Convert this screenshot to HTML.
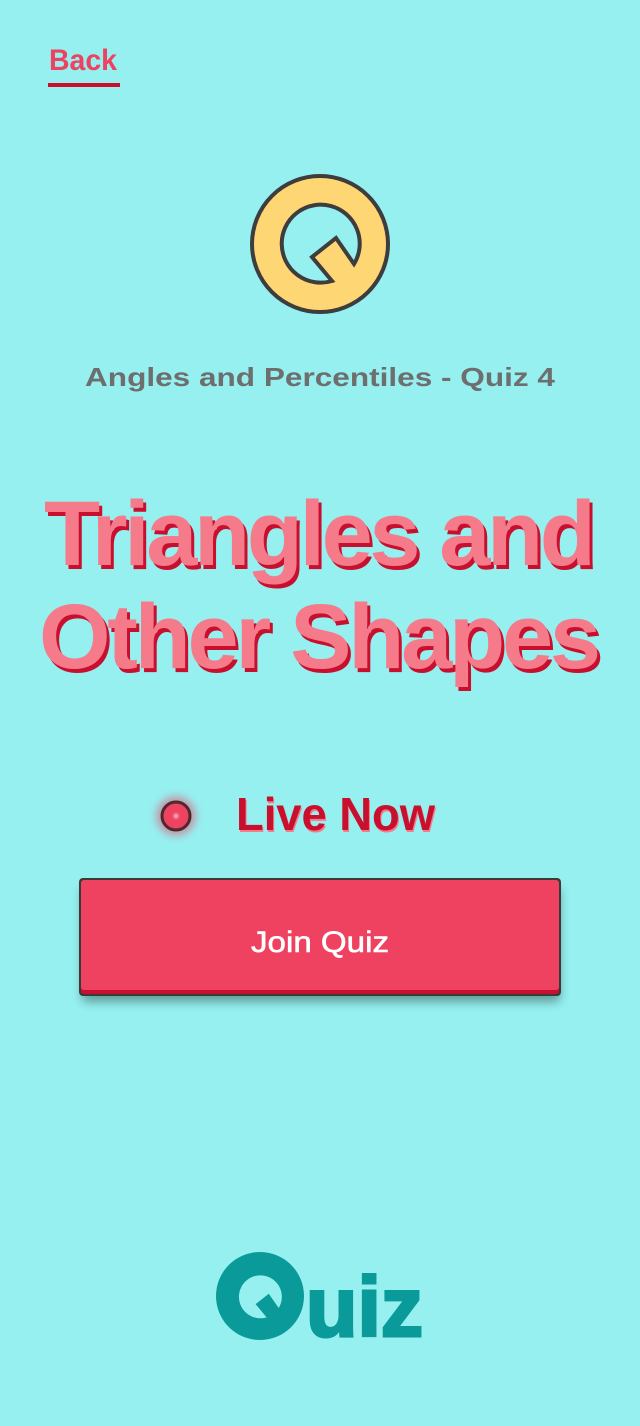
<!DOCTYPE html>
<html><head><meta charset="utf-8"><style>
html,body{margin:0;padding:0;background:#96f0f0;width:640px;height:1426px;overflow:hidden}
svg{display:block}
</style></head><body>
<svg width="640" height="1426" viewBox="0 0 640 1426" xmlns="http://www.w3.org/2000/svg" font-family="Liberation Sans, sans-serif">
<rect width="640" height="1426" fill="#96f0f0"/>
<text x="49" y="70" font-size="30" font-weight="bold" fill="#ee4260" textLength="68" lengthAdjust="spacingAndGlyphs">Back</text>
<rect x="48" y="83" width="72" height="4" fill="#c8102e"/>
<circle cx="320" cy="244" r="68" fill="#ffd674" stroke="#3d3d3d" stroke-width="4"/>
<path d="M354,264 L336,238 L312,257 L332,281 A39 39 0 1 1 354,264 Z" fill="#96f0f0" stroke="#3d3d3d" stroke-width="4" stroke-linejoin="miter"/>
<text x="320" y="386" text-anchor="middle" font-size="26" font-weight="bold" fill="#6e6e6e" textLength="470" lengthAdjust="spacingAndGlyphs">Angles and Percentiles - Quiz 4</text>
<g font-size="92" font-weight="bold" text-anchor="middle" lengthAdjust="spacingAndGlyphs">
<text x="323" y="569" fill="#c8102e" textLength="552">Triangles and</text>
<text x="323" y="672" fill="#c8102e" textLength="562">Other Shapes</text>
<text x="320" y="565" fill="#f57a8a" textLength="552">Triangles and</text>
<text x="320" y="668" fill="#f57a8a" textLength="562">Other Shapes</text>
</g>
<defs><filter id="g" x="-1" y="-1" width="3" height="3"><feGaussianBlur stdDeviation="4"/></filter>
<filter id="s" x="-0.2" y="-0.5" width="1.4" height="2"><feGaussianBlur stdDeviation="5"/></filter>
<radialGradient id="rg"><stop offset="0" stop-color="#ffb0c0"/><stop offset="0.3" stop-color="#ee4260"/></radialGradient></defs>
<circle cx="176" cy="816" r="20" fill="#ee4260" opacity="0.5" filter="url(#g)"/>
<circle cx="176" cy="816" r="14" fill="url(#rg)" stroke="#4a2a2e" stroke-width="3"/>
<text x="237" y="832" font-size="46" font-weight="bold" fill="#f57a8a" textLength="199" lengthAdjust="spacingAndGlyphs">Live Now</text>
<text x="236" y="830" font-size="46" font-weight="bold" fill="#c8102e" textLength="199" lengthAdjust="spacingAndGlyphs">Live Now</text>
<rect x="82" y="888" width="478" height="114" rx="4" fill="#000" opacity="0.35" filter="url(#s)"/>
<rect x="79" y="878" width="482" height="118" rx="4" fill="#3a3a3a"/>
<rect x="81" y="880" width="478" height="114" rx="3" fill="#c8102e"/>
<rect x="81" y="880" width="478" height="110" rx="3" fill="#ee4260"/>
<text x="320" y="952" text-anchor="middle" font-size="30" fill="#fff" stroke="#fff" stroke-width="0.6" textLength="138" lengthAdjust="spacingAndGlyphs">Join Quiz</text>
<circle cx="260" cy="1296" r="44" fill="#0a9a9a"/>
<g transform="translate(260,1297) scale(0.55) translate(-320,-244)">
<path d="M354,264 L336,238 L312,257 L332,281 A39 39 0 1 1 354,264 Z" fill="#96f0f0"/>
</g>
<text x="306" y="1336" font-size="84" font-weight="bold" fill="#0a9a9a" stroke="#0a9a9a" stroke-width="3" textLength="117" lengthAdjust="spacingAndGlyphs">uiz</text>
</svg>
</body></html>
